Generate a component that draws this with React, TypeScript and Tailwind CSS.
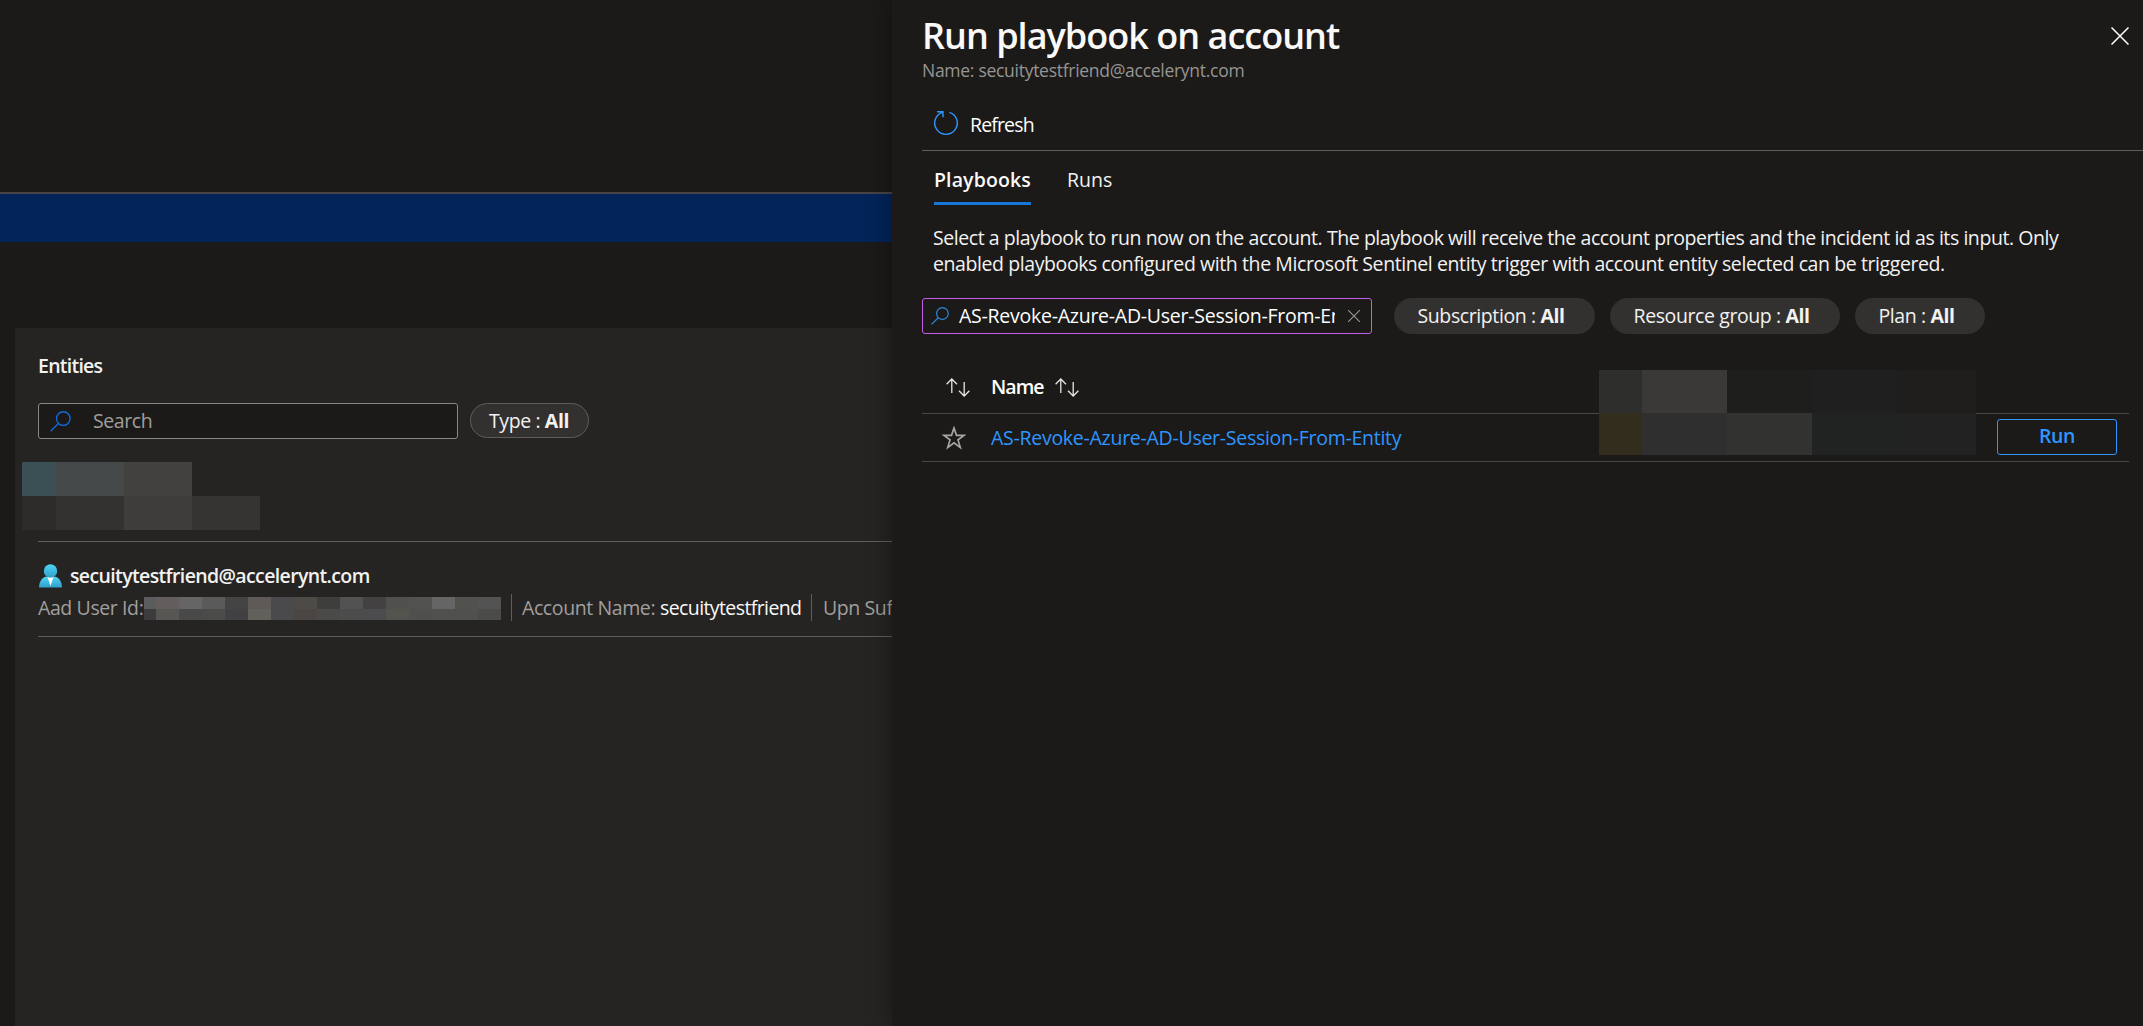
import React from "react";

const AAD_TOP = ["#5a5c5e", "#635e5d", "#656565", "#5a5a5a", "#444444", "#5f5a57", "#4a4a4c", "#4e4a45", "#3e3e3c", "#525252", "#434142", "#50504e", "#525250", "#656565", "#51514e", "#535353"];
const AAD_BOTTOM = ["#3c3b3e", "#575653", "#4a4949", "#4b4b49", "#414042", "#62605b", "#4a4a4c", "#4b4644", "#4a4a49", "#4c4c4d", "#4c4b4d", "#53544e", "#4f4f4d", "#50504e", "#50504c", "#4b4b4a"];

function SearchIcon({ className }: { className: string }) {
  return (
    <svg viewBox="0 0 21 21" fill="none" strokeWidth="1.4" className={className}>
      <circle cx="13.3" cy="7.6" r="6.8" />
      <path d="M8.4 12.5 0.6 20.3" />
    </svg>
  );
}

function SortIcon() {
  return (
    <svg width="24" height="19" viewBox="0 0 24 19" fill="none" stroke="#e8e6e4" strokeWidth="1.3" className="shrink-0">
      <path d="M5.8 15V1M0.6 6.2 5.8 1l5.2 5.2M18.2 4v14M13 12.8l5.2 5.2 5.2-5.2" />
    </svg>
  );
}

function Mosaic({ cells, height }: { cells: [string, string][]; height: string }) {
  return (
    <div className={`flex ${height}`}>
      {cells.map(([w, c], i) => (
        <div key={i} className={w} style={{ backgroundColor: c }} />
      ))}
    </div>
  );
}

function Pill({ label, className }: { label: string; className: string }) {
  return (
    <div className={`flex items-center rounded-full bg-[#323130] whitespace-pre ${className}`}>
      <span>{label} : </span>
      <span className="font-bold">All</span>
    </div>
  );
}

export default function App() {
  return (
    <div className="flex h-[1026px] w-[2143px] overflow-hidden bg-[#1b1a19] font-['Open_Sans',sans-serif] text-[19.5px] leading-[26px] tracking-[-0.4px] text-[#f3f2f1]">
      <div className="flex h-full w-[892px] shrink-0 flex-col overflow-hidden">
        <div className="mt-[192px] h-[50px] shrink-0 border-t-2 border-[#484644] bg-[#022459]" />
        <div className="mt-[86px] ml-[15px] flex flex-1 flex-col bg-[#252423] pl-[23px] whitespace-nowrap">
          <h2 className="mt-[25px] font-semibold tracking-[-0.75px]">Entities</h2>
          <div className="mt-6 flex gap-3">
            <div className="flex h-9 w-[420px] items-center rounded-[3px] border border-[#8a8886] bg-[#1b1a19] pl-[11px] text-[#a19f9d]">
              <SearchIcon className="size-[21px] stroke-[#1468d8]" />
              <span className="ml-[22px]">Search</span>
            </div>
            <Pill label="Type" className="h-[35px] w-[119px] border border-[#605e5c] pl-[18px]" />
          </div>
          <div className="mt-[23px] -ml-4">
            <Mosaic height="h-[34px]" cells={[["w-[34px]", "#3b5054"], ["w-[68px]", "#45494a"], ["w-[68px]", "#43413f"]]} />
            <Mosaic height="h-[34px]" cells={[["w-[34px]", "#2d2c2b"], ["w-[68px]", "#333231"], ["w-[68px]", "#3e3d3b"], ["w-[68px]", "#353432"]]} />
          </div>
          <div className="mt-[11px] flex h-24 flex-col border-y border-[#605e5c]">
            <div className="mt-[21px] flex items-center">
              <svg width="24" height="24" viewBox="0 0 24 24" className="ml-px">
                <defs>
                  <linearGradient id="person" x1="0" y1="0" x2="0" y2="1">
                    <stop offset="0" stopColor="#4fd6f5" />
                    <stop offset="1" stopColor="#2f9fcb" />
                  </linearGradient>
                </defs>
                <path d="M0 23.500c0-6.500 4-11 8-11h7c4 0 8 4.500 8 11z" fill="url(#person)" />
                <path d="M8.500 13 11.500 22 14.500 13z" fill="#fff" />
                <circle cx="11.500" cy="7" r="6.700" fill="url(#person)" />
              </svg>
              <span className="ml-[7px] font-semibold tracking-[-0.63px]">secuitytestfriend@accelerynt.com</span>
            </div>
            <div className="mt-[5px] flex items-center text-[#a19f9d]">
              <span className="w-[106px] shrink-0">Aad User Id:</span>
              <div className="mt-px shrink-0">
                <div className="flex h-3">
                  {AAD_TOP.map((c, i) => (
                    <div key={i} className={i ? "w-[23px]" : "w-3"} style={{ backgroundColor: c }} />
                  ))}
                </div>
                <div className="flex h-[11px]">
                  {AAD_BOTTOM.map((c, i) => (
                    <div key={i} className={i ? "w-[23px]" : "w-3"} style={{ backgroundColor: c }} />
                  ))}
                </div>
              </div>
              <div className="ml-[10px] h-[27px] shrink-0 border-l border-[#605e5c]" />
              <span className="ml-[10px] w-[138px] shrink-0">Account Name:</span>
              <span className="w-[141px] shrink-0 tracking-[-0.6px] text-[#faf9f8]">secuitytestfriend</span>
              <div className="ml-[10px] h-[27px] shrink-0 border-l border-[#605e5c]" />
              <span className="ml-[11px] shrink-0">Upn Suffix:</span>
            </div>
          </div>
        </div>
      </div>

      <main className="relative flex min-w-0 flex-1 flex-col bg-[#1b1a19] pl-[30px] whitespace-nowrap shadow-[-4px_0_20px_rgba(0,0,0,0.28)]">
        <div className="flex justify-between">
          <div>
            <h1 className="mt-[13px] text-[36px] leading-[45px] font-semibold tracking-[-0.98px] text-[#faf9f8]">Run playbook on account</h1>
            <p className="text-[17.5px] leading-[25px] tracking-[-0.28px] text-[#979593]">Name: secuitytestfriend@accelerynt.com</p>
          </div>
          <svg width="18" height="18" viewBox="0 0 18 18" stroke="#fff" strokeWidth="1.5" className="mt-[27px] mr-[14px]">
            <path d="M.5.5l17 17M17.500.5l-17 17" />
          </svg>
        </div>
        <div className="mt-[28px] flex h-[40px] border-b border-[#605e5c] pl-3">
          <svg width="24" height="25" viewBox="0 0 24 25" fill="none" stroke="#2e96ff" strokeWidth="1.400">
            <path d="M15.500 1.300A11.300 11.300 0 1 1 8.500 1.300M3 .8h6v5.500" />
          </svg>
          <span className="ml-3 pt-px tracking-[-0.85px] text-white">Refresh</span>
        </div>
        <div className="mt-[15px] flex h-[39px] gap-[36px] pl-3">
          <span className="h-full w-[97px] border-b-[3px] border-[#1677d8] pt-px font-semibold tracking-[0.12px] text-[#faf9f8]">Playbooks</span>
          <span className="pt-px tracking-normal">Runs</span>
        </div>
        <p className="mt-5 w-[1180px] pl-[11px] tracking-[-0.435px]">
          Select a playbook to run now on the account. The playbook will receive the account properties and the incident id as its input. Only
          <br />
          <span className="tracking-[-0.41px]">
            enabled playbooks configured with the Microsoft Sentinel entity trigger with account entity selected can be triggered.
          </span>
        </p>
        <div className="mt-[21px] flex">
          <div className="flex h-9 w-[450px] items-center rounded-[3px] border border-[#c15ee8] pl-2">
            <SearchIcon className="size-[18px] shrink-0 stroke-[#2e88dd]" />
            <span className="ml-[10px] w-[376px] overflow-hidden tracking-[-0.25px] text-white">AS-Revoke-Azure-AD-User-Session-From-Entity</span>
            <svg width="12" height="12" viewBox="0 0 12 12" stroke="#979593" strokeWidth="1.100" className="ml-[13px]">
              <path d="M0 0l12 12M12 0 0 12" />
            </svg>
          </div>
          <Pill label="Subscription" className="ml-[22px] h-9 w-[201px] pl-[23.5px]" />
          <Pill label="Resource group" className="ml-[15px] h-9 w-[230px] pl-[23.5px]" />
          <Pill label="Plan" className="ml-[15px] h-9 w-[130px] pl-[23.5px]" />
        </div>
        <div className="mt-9 mr-[14px] flex h-11 items-start border-b border-[#484644]">
          <div className="mt-1 flex items-center pl-6">
            <SortIcon />
            <span className="ml-[21px] w-[64px] font-semibold tracking-[-0.95px] text-white">Name</span>
            <SortIcon />
          </div>
          <div className="relative ml-[520px]">
            <Mosaic height="h-[43px]" cells={[["w-[43px]", "#2e2e2c"], ["w-[85px]", "#3a3937"], ["w-[85px]", "#1e1e1c"], ["w-[85px]", "#1f1f1f"], ["w-[79px]", "#1f1e1d"]]} />
            <Mosaic height="h-[42px]" cells={[["w-[43px]", "#332d1e"], ["w-[85px]", "#2f2f30"], ["w-[85px]", "#323230"], ["w-[85px]", "#212322"], ["w-[79px]", "#222222"]]} />
          </div>
        </div>
        <div className="mr-[14px] flex h-12 border-b border-[#484644]">
          <svg width="24" height="24" viewBox="0 0 24 24" fill="none" stroke="#a8a6a4" strokeWidth="1.700" className="mt-3 ml-5">
            <path d="M12 2l2.500 7.300h7.700l-6.200 4.600 2.300 7.700-6.300-4.700-6.300 4.700L8 13.900 1.800 9.300h7.700z" />
          </svg>
          <span className="mt-[11px] ml-[25px] w-[411px] tracking-[-0.27px] text-[#2e96ff]">AS-Revoke-Azure-AD-User-Session-From-Entity</span>
          <button className="mt-[5px] mr-3 ml-auto h-9 w-[120px] rounded-[3px] border border-[#2e96ff] pb-0.5 font-semibold text-[#2e96ff]">Run</button>
        </div>
      </main>
    </div>
  );
}
